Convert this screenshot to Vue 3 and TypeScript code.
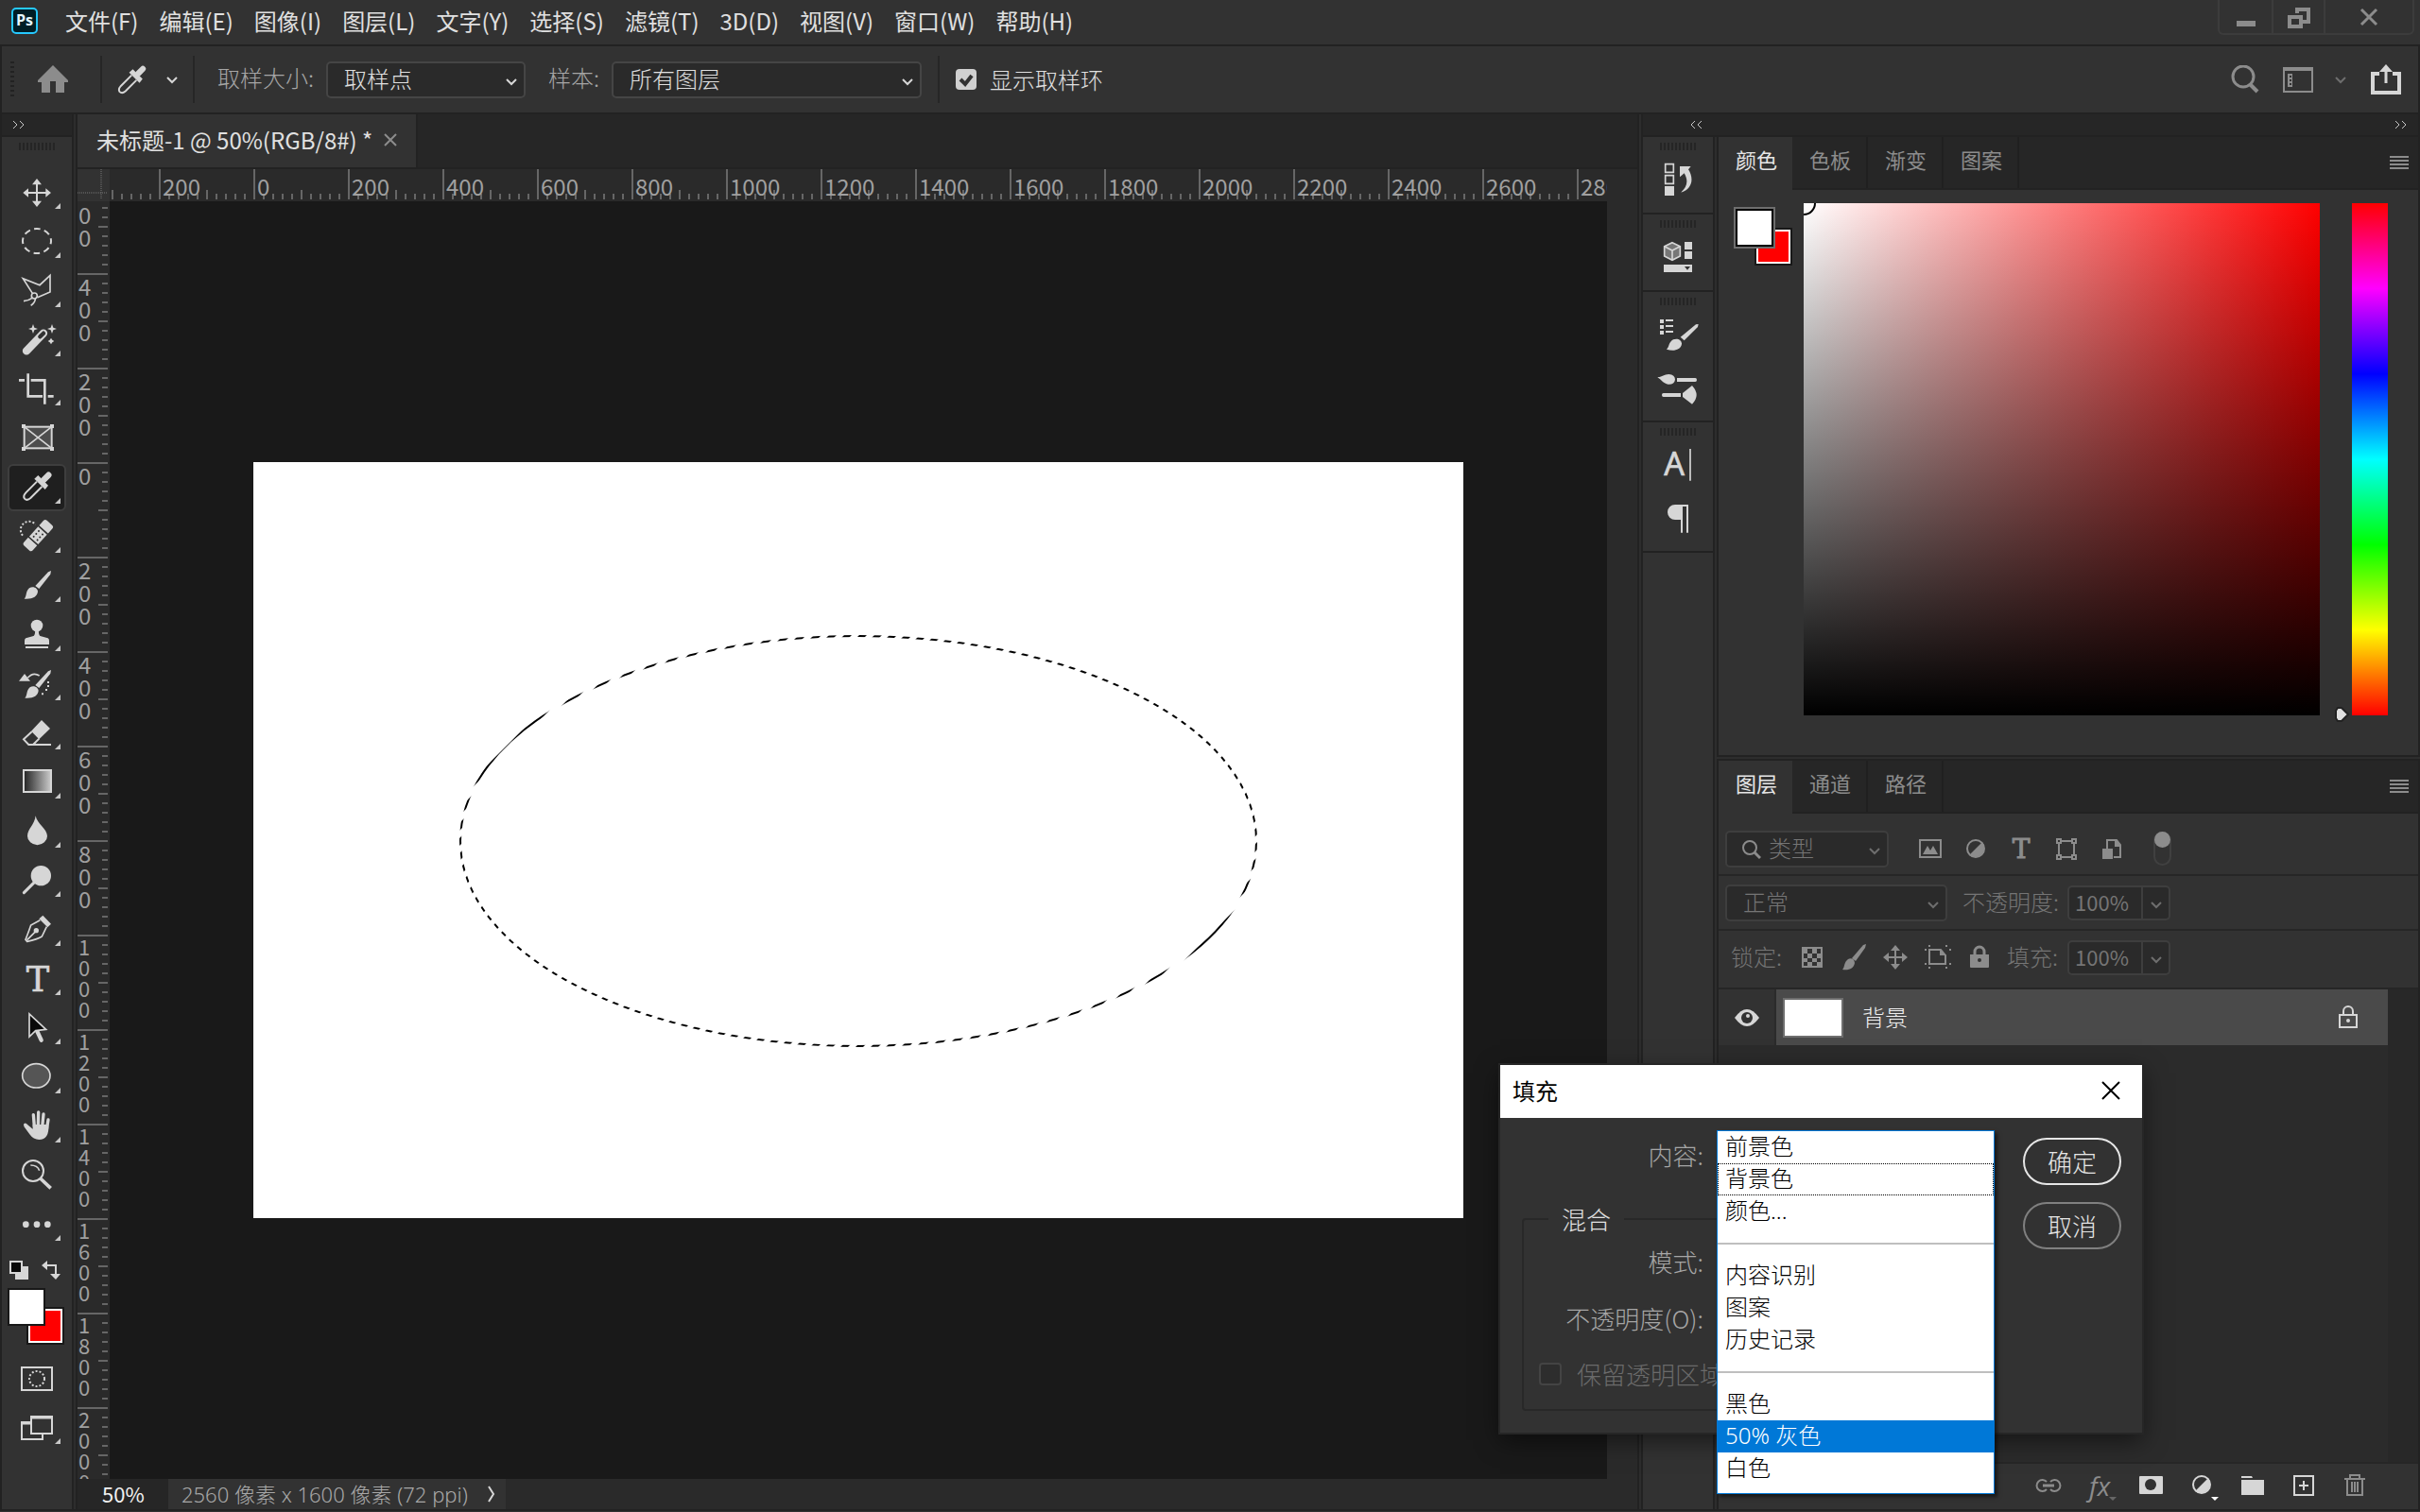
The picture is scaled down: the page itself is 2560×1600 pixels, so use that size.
<script setup lang="ts">
import { ref } from 'vue'

interface Tool {
  name: string
  top: number
  art: string
  more?: boolean
  active?: boolean
}

const menus = ['文件(F)', '编辑(E)', '图像(I)', '图层(L)', '文字(Y)', '选择(S)', '滤镜(T)', '3D(D)', '视图(V)', '窗口(W)', '帮助(H)']

const ink = '#d6d6d6'
const line = (w: number) => `fill="none" stroke="${ink}" stroke-width="${w}"`
const star = (x: number, y: number, r: number) =>
  `<path d="M${x} ${y - r}L${x + 4} ${y - 4}L${x + r} ${y}L${x + 4} ${y + 4}L${x} ${y + r}L${x - 4} ${y + 4}L${x - r} ${y}L${x - 4} ${y - 4}Z"/>`

const dropperArt = `<path d="M139 1163L154 1148" ${line(19)} stroke-linecap="round"/><path d="M121 1149L153 1181L143 1194L109 1160Z"/><path d="M117 1169L82 1204Q72 1215 78 1223Q86 1231 97 1221L133 1185" ${line(6)}/>`

const tools: Tool[] = [
  { name: '移动工具', top: 174, more: true, art: `<path d="M117 215V290M82 252H153" ${line(6)}/><path d="M117 207L102 226H132ZM117 297L102 278H132ZM73 252L90 238V266ZM162 252L145 238V266Z"/>` },
  { name: '椭圆选框工具', top: 330, more: true, art: `<ellipse cx="117" cy="405" rx="45" ry="39" ${line(6)} stroke-dasharray="20 13" stroke-dashoffset="10"/>` },
  { name: '多边形套索工具', top: 486, more: true, art: `<path d="M103 571L73 524L126 545L159 514V567L119 584M102 586Q90 595 75 596M112 588Q112 600 98 610" ${line(5)}/><circle cx="109" cy="579" r="9" ${line(5)}/>` },
  { name: '魔棒工具', top: 642, more: true, art: `<path d="M84 754L138 698" ${line(25)} stroke-linecap="round"/><path d="M127 709L138 698" fill="none" stroke="#323232" stroke-width="13" stroke-linecap="round"/>${star(105, 684, 15)}${star(165, 684, 15)}${star(162, 723, 10)}` },
  { name: '裁剪工具', top: 798, more: true, art: `<path d="M60 847h18M98 847h44v76M89 826v72h46M152 898h18" ${line(8)}/>` },
  { name: '图框工具', top: 954, art: `<rect x="77" y="995" width="87" height="68" fill="#4d4d4d" stroke="${ink}" stroke-width="6"/><path d="M77 995L164 1063M164 995L77 1063" ${line(5)}/><path d="M69 987h12v12h-12zM159 987h12v12h-12zM69 1059h12v12h-12zM159 1059h12v12h-12z"/>` },
  { name: '吸管工具', top: 1110, more: true, active: true, art: dropperArt },
  { name: '污点修复画笔工具', top: 1266, more: true, art: `<g transform="translate(121 1340) rotate(-48)"><path d="M-46-19H-26V19H-46Q-54 19-54 11V-11Q-54-19-46-19ZM46-19H26V19H46Q54 19 54 11V-11Q54-19 46-19ZM-21-19H21V19H-21Z"/><g fill="#323232"><circle cx="-12" cy="-8" r="3"/><circle cx="0" cy="-8" r="3"/><circle cx="12" cy="-8" r="3"/><circle cx="-12" cy="8" r="3"/><circle cx="0" cy="8" r="3"/><circle cx="12" cy="8" r="3"/></g></g><path d="M72 1340A26 26 0 0 1 113 1305" ${line(6)} stroke-dasharray="6 6"/>` },
  { name: '画笔工具', top: 12, more: true, art: `<path d="M162 42L153 46L112 90L124 99L160 53ZM77 131C86 122 80 108 93 97C106 89 120 98 120 108C118 124 104 133 77 131Z"/>` },
  { name: '仿制图章工具', top: 168, more: true, art: `<circle cx="117" cy="216" r="19"/><path d="M111 230H123Q121 248 130 250L152 256Q156 258 156 264V276H78V264Q78 258 82 256L104 250Q113 248 111 230ZM81 282H153V288H81Z"/>` },
  { name: '历史记录画笔工具', top: 324, more: true, art: `<path d="M162 357L153 361L112 405L124 414L160 368ZM79 446C88 437 82 423 95 412C108 404 122 413 122 423C120 439 106 448 79 446ZM60 392L78 369L96 392ZM150 393h6v6h-6zM150 405h6v6h-6zM144 417h6v6h-6zM132 430h6v6h-6z"/><path d="M88 382Q105 362 125 375" ${line(5)}/>` },
  { name: '橡皮擦工具', top: 480, more: true, art: `<path d="M132 516L159 543L124 577L99 551Z"/><path d="M101 553L75 577L91 594H105L124 575" ${line(6)}/><path d="M91 594H162" ${line(6)}/>` },
  { name: '渐变工具', top: 636, more: true, art: `<defs><linearGradient id="ramp"><stop offset="0" stop-color="#222"/><stop offset="1" stop-color="#ccc"/></linearGradient></defs><rect x="75" y="675" width="87" height="69" fill="url(#ramp)" stroke="${ink}" stroke-width="6"/>` },
  { name: '模糊工具', top: 792, more: true, art: `<path d="M113 820C117 845 150 862 150 884A31 28 0 0 1 87 884C87 862 110 848 113 820Z"/>` },
  { name: '减淡工具', top: 948, more: true, art: `<circle cx="130" cy="1010" r="32"/><path d="M76 1064L112 1028" ${line(9)} stroke-linecap="round"/>` },
  { name: '钢笔工具', top: 1104, more: true, art: `<path d="M136 1136L162 1163L151 1174L124 1147Z"/><path d="M127 1151L98 1167Q92 1185 81 1213L86 1219Q118 1212 133 1203L148 1172M86 1214L113 1187" ${line(5)}/><circle cx="115" cy="1184" r="8"/>` },
  { name: '横排文字工具', top: 1260, more: true, art: `<text x="120" y="1377" text-anchor="middle" font-family="DejaVu Serif, serif" font-size="110" stroke="${ink}" stroke-width="2">T</text>` },
  { name: '路径选择工具', top: 6, more: true, art: `<path d="M118 94L131 122" ${line(13)} stroke-linecap="round"/><path d="M93 39V111L113 92L146 88Z" fill="#0a0a0a" stroke="${ink}" stroke-width="5"/>` },
  { name: '椭圆工具', top: 162, more: true, art: `<ellipse cx="115" cy="235" rx="44" ry="38" fill="#555" stroke="${ink}" stroke-width="5"/>` },
  { name: '抓手工具', top: 318, more: true, art: `<path d="M106 359L109 396M122 351L121 396M138 357L134 398M153 375L148 406M80 391L104 420" ${line(10)} stroke-linecap="round"/><path d="M104 390H154Q157 438 124 438Q106 438 94 421L76 396L84 388L104 404Z"/>` },
  { name: '缩放工具', top: 474, art: `<circle cx="105" cy="537" r="33" ${line(6)}/><path d="M97 519Q119 519 125 536" ${line(5)}/><path d="M128 561L161 592" ${line(11)}/>` },
  { name: '编辑工具栏', top: 630, more: true, art: `<circle cx="82" cy="707" r="10"/><circle cx="117" cy="707" r="10"/><circle cx="151" cy="707" r="10"/>` },
]

const dock: { name: string; top: number; art: string }[][] = [
  [{ name: '历史记录', top: 126, art: `<path d="M185 161h26v26h-26zM185 197h26v26h-26z" ${line(5)}/><path d="M183 231h30v30h-30zM231 168H266L258 178C276 205 272 240 234 251C256 232 258 212 245 190L231 202Z"/>` }],
  [{ name: '库', top: 372, art: `<path d="M207 410L232 422V453L207 466L182 453V422Z" fill="#777" stroke="${ink}" stroke-width="5"/><path d="M182 422L207 435L232 422M207 435V466" ${line(5)}/><path d="M246 408h24v24h-24zM246 438h24v24h-24zM180 480h90v24h-90z"/><path d="M246 486h18l-9 11z" fill="#323232"/>` }],
  [
    { name: '画笔设置', top: 618, art: `<path d="M168 654h12v12h-12zM168 672h12v12h-12zM168 690h12v12h-12zM186 654h24v6h-24zM186 672h24v6h-24zM186 690h24v6h-24zM290 669L282 670L233 710L245 721L288 678ZM189 749C198 742 194 728 210 718C224 712 238 720 237 732C234 752 210 756 189 749Z"/>` },
    { name: '画笔', top: 786, art: `<path d="M160 837C175 838 180 828 196 828Q216 830 216 845Q214 861 194 860C180 858 172 846 160 837ZM222 840h58q5 0 5 6t-5 6h-58zM179 888h55v12h-55q-5 0-5-6t5-6zM240 888L270 864Q284 880 284 894Q284 908 270 923L240 900Z"/>` },
  ],
  [
    { name: '字符', top: 1032, art: `<text x="181" y="1149" font-family="Noto Sans, sans-serif" font-size="102" stroke="${ink}" stroke-width="2">A</text><path d="M264 1065V1166" ${line(5)}/>` },
    { name: '段落', top: 1200, art: `<path d="M216 1242H258V1331H252V1248H240V1331H234V1290H216A24 24 0 0 1 216 1242Z"/>` },
  ],
]

const range = (from: number, to: number) => Array.from({ length: to - from + 1 }, (_, i) => from + i)
const ticksX = range(-15, 140)
const ticksY = range(-27, 107)
const labelsX = range(-1, 14)
const labelsY = range(-3, 10)
const tickSize = (k: number) => (k % 10 === 0 ? 32 : k % 5 === 0 ? 10 : 6)
const value = (n: number) => String(Math.abs(n) * 200)
const pitch = (n: number) => (value(n).length > 3 ? 22 : 24)

const fills = ['前景色', '背景色', '颜色...', '', '内容识别', '图案', '历史记录', '', '黑色', '50% 灰色', '白色']
const current = '背景色'
const hovered = ref('50% 灰色')
const showRing = ref(true)
const keepTransparent = ref(false)
</script>

<template>
  <div class="app">
    <header class="menubar">
      <span class="logo">Ps</span>
      <nav class="menus">
        <button v-for="m in menus" :key="m" class="menu">{{ m }}</button>
      </nav>
      <div class="window-buttons">
        <button class="min" aria-label="最小化"><svg width="20" height="24"><rect y="16" width="20" height="6" fill="#8c8c8c" /></svg></button>
        <button class="max" aria-label="还原"><svg width="24" height="24" fill="none" stroke="#8c8c8c" stroke-width="4"><path d="M10 8V4H22V17H16M2 12H14V22H2Z" /></svg></button>
        <button class="close" aria-label="关闭"><svg width="20" height="20" stroke="#8c8c8c" stroke-width="3"><path d="M2 2L18 18M18 2L2 18" /></svg></button>
      </div>
    </header>

    <section class="options">
      <span class="dots"></span>
      <button class="home" aria-label="主页"><svg width="32" height="30" fill="#8c8c8c"><path d="M16 0L32 16V18H28V29H19V17H13V29H4V18H0V16Z" /></svg></button>
      <span class="rule"></span>
      <button class="current-tool" aria-label="吸管工具">
        <svg width="31" height="31" viewBox="70 1136 96 96" fill="#d6d6d6" v-html="dropperArt"></svg>
        <svg width="14" height="9" class="chev"><path d="M2 2L7 7L12 2" /></svg>
      </button>
      <span class="rule"></span>
      <label class="opt-label" for="size">取样大小:</label>
      <span class="select size">
        <select id="size"><option>取样点</option></select>
        <svg width="14" height="9" class="chev"><path d="M2 2L7 7L12 2" /></svg>
      </span>
      <label class="opt-label" for="sample">样本:</label>
      <span class="select layers">
        <select id="sample"><option>所有图层</option></select>
        <svg width="14" height="9" class="chev"><path d="M2 2L7 7L12 2" /></svg>
      </span>
      <span class="rule ring-rule"></span>
      <label class="ring"><input v-model="showRing" type="checkbox" />显示取样环</label>
      <div class="options-right">
        <button aria-label="搜索"><svg width="30" height="30" fill="none" stroke="#8c8c8c"><circle cx="13" cy="12" r="11" stroke-width="3" /><path d="M20 20L28 28" stroke-width="4" /></svg></button>
        <button class="workspace-btn" aria-label="工作区">
          <svg width="32" height="28"><path d="M1 3H31V27H1Z" fill="none" stroke="#8c8c8c" stroke-width="2" /><path d="M0 1H32V5H0ZM5 8H10V22H5Z" fill="#8c8c8c" /><path d="M7 10h2v2h-2zM7 14h2v2h-2zM7 18h2v2h-2z" fill="#323232" /></svg>
          <svg width="14" height="9" class="chev dim"><path d="M2 2L7 7L12 2" /></svg>
        </button>
        <button aria-label="共享"><svg width="32" height="32" fill="none" stroke="#d6d6d6" stroke-width="4"><path d="M9 10H2V30H30V10H23" /><path d="M16 20V5" stroke-width="3" /><path d="M16 0L23 8H9Z" fill="#d6d6d6" stroke="none" /></svg></button>
      </div>
    </section>

    <div class="workspace">
      <aside class="toolbar">
        <div class="strip"><svg width="14" height="10" class="expand"><path d="M1 1L5 5L1 9M8 1L12 5L8 9" /></svg></div>
        <div class="tool-body">
          <div class="grip-row"><span class="grip"></span></div>
          <button v-for="t in tools" :key="t.name" class="tool" :class="{ active: t.active }" :aria-label="t.name">
            <svg width="62" height="52" :viewBox="`24 ${t.top} 186 156`" fill="#d6d6d6" v-html="t.art"></svg>
            <span v-if="t.more" class="corner"></span>
          </button>
          <div class="swap-row">
            <svg width="20" height="20"><rect x="6" y="6" width="14" height="14" fill="#d6d6d6" /><rect x="1" y="1" width="12" height="12" fill="#0a0a0a" stroke="#d6d6d6" stroke-width="2" /></svg>
            <svg width="20" height="20" fill="#d6d6d6"><path d="M0 5L6 0V4H16V14H20L15 20L9 14H14V6H6V10Z" /></svg>
          </div>
          <div class="swatches">
            <span class="bg-color"></span><span class="fg-color"></span>
          </div>
          <button class="tool" aria-label="快速蒙版"><svg width="34" height="26" fill="none" stroke="#d6d6d6" stroke-width="2"><rect x="1" y="1" width="32" height="24" /><circle cx="17" cy="13" r="8" stroke-dasharray="2 2" /></svg></button>
          <button class="tool" aria-label="屏幕模式"><svg width="34" height="26" fill="none" stroke="#d6d6d6" stroke-width="2"><path d="M11 1H33V19H11ZM11 7H1V25H23V19" /><path d="M10 2H34M1 8H11" stroke-width="3" /></svg><span class="corner"></span></button>
        </div>
      </aside>

      <main class="document">
        <div class="doc-tabs">
          <div class="doc-tab">未标题-1 @ 50%(RGB/8#) * <button class="tab-close" aria-label="关闭标签"><svg width="14" height="14" stroke="#8c8c8c" stroke-width="2"><path d="M1 1L13 13M13 1L1 13" /></svg></button></div>
        </div>
        <div class="doc-body">
          <div class="stage">
            <div class="ruler-row">
              <svg class="ruler-corner" width="34" height="34"><path d="M25 0V32M0 25H32" stroke="#777" stroke-dasharray="1 1" /></svg>
              <svg class="ruler-h" width="100%" height="34">
                <rect v-for="k in ticksX" :key="k" :x="152 + k * 10" :y="32 - tickSize(k)" width="2" :height="tickSize(k)" fill="#666" />
                <text v-for="n in labelsX" :key="n" :x="156 + n * 100" y="28">{{ value(n) }}</text>
              </svg>
            </div>
            <div class="view-row">
              <svg class="ruler-v" width="34" height="100%">
                <rect v-for="k in ticksY" :key="k" :x="32 - tickSize(k)" :y="276 + k * 10" :width="tickSize(k)" height="2" fill="#666" />
                <g v-for="n in labelsY" :key="n">
                  <text v-for="(d, i) in value(n)" :key="i" x="1" :class="{ small: pitch(n) === 22 }" :y="276 + n * 100 + (i + 1) * pitch(n)">{{ d }}</text>
                </g>
              </svg>
              <div class="viewport">
                <svg class="artboard" width="1280" height="800">
                  <defs>
                    <pattern id="ants" width="16" height="16" patternUnits="userSpaceOnUse">
                      <path d="M8 0H16L0 16V8ZM16 8V16H8Z" fill="#000" />
                    </pattern>
                  </defs>
                  <ellipse cx="640" cy="401" rx="421" ry="217" fill="none" stroke="url(#ants)" stroke-width="2" />
                </svg>
              </div>
            </div>
          </div>
        </div>
        <div class="statusbar">
          <span class="zoom">50%</span>
          <span class="info">2560 像素 x 1600 像素 (72 ppi)<svg width="10" height="18" fill="none" stroke="#d6d6d6" stroke-width="2"><path d="M2 1L7 9L2 17" /></svg></span>
        </div>
      </main>

      <div class="side">
        <div class="strip side-strip">
          <svg width="14" height="10" class="expand"><path d="M5 1L1 5L5 9M12 1L8 5L12 9" /></svg>
          <svg width="14" height="10" class="expand"><path d="M1 1L5 5L1 9M8 1L12 5L8 9" /></svg>
        </div>
        <div class="side-body">
          <aside class="dock">
            <div v-for="(g, i) in dock" :key="i" class="dock-group">
              <span class="grip"></span>
              <button v-for="d in g" :key="d.name" :aria-label="d.name">
                <svg width="74" height="56" :viewBox="`114 ${d.top} 222 168`" fill="#d6d6d6" v-html="d.art"></svg>
              </button>
            </div>
          </aside>

          <div class="panels">
            <section class="panel">
              <div class="tabs">
                <button class="tab on">颜色</button><button class="tab">色板</button><button class="tab">渐变</button><button class="tab">图案</button>
                <svg class="burger" width="20" height="14" fill="#8c8c8c"><path d="M0 0h20v2h-20zM0 4h20v2h-20zM0 8h20v2h-20zM0 12h20v2h-20z" /></svg>
              </div>
              <div class="color-body">
                <div class="swatches big"><span class="bg-color"></span><span class="fg-color"></span></div>
                <div class="spectrum"><svg width="14" height="14" fill="none" stroke="#000" stroke-width="2"><circle r="12" /></svg></div>
                <div class="hue">
                  <svg class="hue-mark" width="16" height="18"><path d="M3 2H7L14 9L7 16H3L1 13V5Z" fill="#e0e0e0" stroke="#222" stroke-width="2" /></svg>
                </div>
              </div>
            </section>

            <section class="panel layers-panel">
              <div class="tabs">
                <button class="tab on">图层</button><button class="tab">通道</button><button class="tab">路径</button>
                <svg class="burger" width="20" height="14" fill="#8c8c8c"><path d="M0 0h20v2h-20zM0 4h20v2h-20zM0 8h20v2h-20zM0 12h20v2h-20z" /></svg>
              </div>
              <div class="row filter">
                <span class="select kind">
                  <svg width="20" height="22" class="lens" fill="none" stroke="#8c8c8c"><circle cx="8" cy="9" r="7" stroke-width="2" /><path d="M13 14L19 20" stroke-width="3" /></svg>
                  <select aria-label="图层过滤"><option>类型</option></select>
                  <svg width="14" height="9" class="chev dim"><path d="M2 2L7 7L12 2" /></svg>
                </span>
                <div class="filter-icons">
                  <button aria-label="像素图层"><svg width="24" height="24"><rect x="1" y="3" width="22" height="18" fill="none" stroke="#8c8c8c" stroke-width="2" /><path d="M4 18L9 9L12 14L15 9L20 18Z" fill="#8c8c8c" /></svg></button>
                  <button aria-label="调整图层"><svg width="24" height="24"><circle cx="12" cy="12" r="9" fill="none" stroke="#8c8c8c" stroke-width="2" /><path d="M19 5A10 10 0 0 1 5 19Z" fill="#8c8c8c" /></svg></button>
                  <button aria-label="文字图层"><svg width="24" height="24"><text x="12" y="22" text-anchor="middle" font-family="DejaVu Serif, serif" font-size="28" fill="#8c8c8c" stroke="#8c8c8c">T</text></svg></button>
                  <button aria-label="形状图层"><svg width="24" height="24" fill="#323232" stroke="#8c8c8c" stroke-width="2"><rect x="4" y="4" width="16" height="17" /><path d="M2 2h4v4h-4zM18 2h4v4h-4zM2 19h4v4h-4zM18 19h4v4h-4z" /></svg></button>
                  <button aria-label="智能对象"><svg width="24" height="24"><path d="M7 12V3H17L21 8V21H14" fill="none" stroke="#8c8c8c" stroke-width="2" /><path d="M2 12H13V23H2ZM15 3V10H22L17 3Z" fill="#8c8c8c" /></svg></button>
                </div>
                <button class="toggle" aria-label="打开或关闭图层过滤"><span></span></button>
              </div>
              <div class="row blend">
                <span class="select mode">
                  <select aria-label="混合模式"><option>正常</option></select>
                  <svg width="14" height="9" class="chev dim"><path d="M2 2L7 7L12 2" /></svg>
                </span>
                <label class="dim-label" for="opacity">不透明度:</label>
                <span class="num"><input id="opacity" value="100%" /><button aria-label="不透明度选项"><svg width="14" height="9" class="chev dim"><path d="M2 2L7 7L12 2" /></svg></button></span>
              </div>
              <div class="row lock">
                <span class="dim-label">锁定:</span>
                <div class="lock-icons">
                  <button aria-label="锁定透明像素"><svg width="26" height="26"><path d="M2 2h22v22h-22z" fill="#8c8c8c" /><path d="M8 4h5v5h-5zM18 4h4v5h-4zM4 9h4v5h-4zM13 9h5v5h-5zM8 14h5v4h-5zM18 14h4v4h-4zM4 18h4v4h-4zM13 18h5v4h-5z" fill="#323232" /></svg></button>
                  <button aria-label="锁定图像像素"><svg width="26" height="28" fill="#8c8c8c"><path d="M26 0L23 1L11 15L15 18L25 4ZM1 27C4 24 2 20 7 16C11 14 14 17 14 20C13 26 8 28 1 27Z" /></svg></button>
                  <button aria-label="锁定位置"><svg width="26" height="26" fill="#8c8c8c"><path d="M13 0L18 6H14V12H20V8L26 13L20 18V14H14V20H18L13 26L8 20H12V14H6V18L0 13L6 8V12H12V6H8Z" /></svg></button>
                  <button aria-label="锁定画板"><svg width="28" height="26"><path d="M5 5H17L22 11V20H5Z" fill="none" stroke="#8c8c8c" stroke-width="2" /><path d="M16 4V11H23ZM0 4h2v2h-2zM4 0h2v2h-2zM22 0h2v2h-2zM26 4h2v2h-2zM0 19h2v2h-2zM4 23h2v2h-2zM22 23h2v2h-2zM26 19h2v2h-2z" fill="#8c8c8c" /></svg></button>
                  <button aria-label="全部锁定"><svg width="26" height="26"><path d="M7 10V7A5 5 0 0 1 17 7V10" fill="none" stroke="#8c8c8c" stroke-width="3" /><path d="M2 10H22V23Q22 24 21 24H3Q2 24 2 23Z" fill="#8c8c8c" /><circle cx="12" cy="16" r="2" fill="#323232" /></svg></button>
                </div>
                <label class="dim-label" for="fillamt">填充:</label>
                <span class="num"><input id="fillamt" value="100%" /><button aria-label="填充选项"><svg width="14" height="9" class="chev dim"><path d="M2 2L7 7L12 2" /></svg></button></span>
              </div>
              <div class="layer-list">
                <div class="layer-col">
                  <div class="layer">
                    <button class="eye" aria-label="可见性"><svg width="26" height="18"><path d="M0 9Q13-9 26 9Q13 27 0 9Z" fill="#d6d6d6" /><circle cx="13" cy="9" r="6" fill="#323232" /><circle cx="14" cy="7" r="2" fill="#d6d6d6" /></svg></button>
                    <div class="layer-main">
                      <span class="thumb"></span>
                      <span class="layer-name">背景</span>
                      <svg width="22" height="26" fill="none" stroke="#d6d6d6" stroke-width="2"><rect x="2" y="10" width="18" height="13" /><path d="M6 10V6A5 5 0 0 1 16 6V10" /><circle cx="11" cy="16" r="2" fill="#d6d6d6" stroke="none" /></svg>
                    </div>
                  </div>
                </div>
                <div class="scroll-col"></div>
              </div>
              <div class="layer-actions">
                <button aria-label="链接图层"><svg width="28" height="28" fill="none" stroke="#8c8c8c" stroke-width="2"><path d="M12 10A6 6 0 1 0 12 18M16 10A6 6 0 1 1 16 18" /><path d="M8 14H20" stroke-width="3" /></svg></button>
                <button class="fx" aria-label="图层样式"><span>fx</span><svg class="down" width="8" height="4"><path d="M0 0H8L4 4Z" fill="#666" /></svg></button>
                <button aria-label="添加蒙版"><svg width="28" height="28"><rect x="2" y="4" width="25" height="19" rx="1" fill="#d6d6d6" /><circle cx="14" cy="13" r="6" fill="#323232" /></svg></button>
                <button aria-label="调整图层"><svg width="28" height="28"><circle cx="14" cy="13" r="9" fill="none" stroke="#d6d6d6" stroke-width="2" /><path d="M21 6A10 10 0 0 1 7 20Z" fill="#d6d6d6" /></svg><svg class="down" width="8" height="4"><path d="M0 0H8L4 4Z" fill="#fff" /></svg></button>
                <button aria-label="新建组"><svg width="28" height="28"><path d="M2 4H13L14 6H2ZM2 8H26V24H2Z" fill="#d6d6d6" /></svg></button>
                <button aria-label="新建图层"><svg width="28" height="28" fill="none" stroke="#d6d6d6" stroke-width="2"><rect x="4" y="4" width="20" height="20" /><path d="M9 14H19M14 9V19" /></svg></button>
                <button aria-label="删除图层"><svg width="28" height="28" fill="none" stroke="#8c8c8c" stroke-width="2"><path d="M3 7H25M9 6V3H19V6M6 7V24H22V7M11 10V21M14 10V21M17 10V21" /></svg></button>
              </div>
            </section>
          </div>
        </div>
      </div>
    </div>

    <div class="dialog" role="dialog" aria-labelledby="dlg-title">
      <div class="dlg-title">
        <span id="dlg-title">填充</span>
        <button aria-label="关闭对话框"><svg width="20" height="20" stroke="#000" stroke-width="2"><path d="M1 1L19 19M19 1L1 19" /></svg></button>
      </div>
      <div class="dlg-body">
        <div class="dlg-form">
          <div id="contents" class="dlg-row first">内容:</div>
          <fieldset>
            <legend>混合</legend>
            <div class="dlg-row">模式:</div>
            <div class="dlg-row">不透明度(O):</div>
            <label class="keep"><input v-model="keepTransparent" type="checkbox" disabled />保留透明区域</label>
          </fieldset>
          <ul class="list" role="listbox" aria-labelledby="contents">
            <li
              v-for="(f, i) in fills"
              :key="i"
              :role="f ? 'option' : 'separator'"
              :class="{ sep: !f, current: f === current, hot: !!f && f === hovered }"
              @mouseenter="f && (hovered = f)"
            >{{ f }}</li>
          </ul>
        </div>
        <div class="dlg-buttons">
          <button class="ok">确定</button>
          <button>取消</button>
        </div>
      </div>
    </div>
  </div>
</template>

<style>
body {
  margin: 0;
  background: #323232;
}
</style>

<style scoped>
.app {
  position: relative;
  box-sizing: border-box;
  display: flex;
  flex-direction: column;
  height: 100vh;
  min-height: 1600px;
  padding-bottom: 1px;
  background: #323232;
  color: #e0e0e0;
  font: 24px/32px "Noto Sans CJK SC", sans-serif;
  overflow: hidden;
}
.app *, .app *::before { box-sizing: border-box; }
button, select, input {
  margin: 0;
  padding: 0;
  border: 0;
  background: none;
  color: inherit;
  font: inherit;
}
svg { display: block; flex: none; }
.chev { fill: none; stroke: #d6d6d6; stroke-width: 2; }
.chev.dim { stroke: #6e6e6e; }
.expand { fill: none; stroke: #c8c8c8; stroke-width: 1; }

.menubar {
  display: flex;
  height: 49px;
  flex: none;
  border-bottom: 2px solid #222;
}
.logo {
  width: 28px;
  height: 28px;
  margin: 8px 29px 0 12px;
  border: 2px solid #26c9ff;
  border-radius: 5px;
  background: #001e26;
  color: #e4f8ff;
  font: 700 16px/22px "Open Sans", sans-serif;
  text-align: center;
}
.menus { display: flex; gap: 22px; height: 44px; align-items: center; }
.menu { white-space: nowrap; }
.window-buttons {
  display: flex;
  height: 37px;
  margin: 0 6px 0 auto;
  border: 2px solid #3c3c3c;
  border-top: 0;
  border-radius: 0 0 6px 6px;
}
.window-buttons button { display: grid; place-items: center; width: 55px; }
.window-buttons button + button { border-left: 2px solid #3c3c3c; }
.window-buttons .close { width: 94px; }

.options {
  display: flex;
  align-items: center;
  height: 72px;
  flex: none;
  padding: 0 18px 0 9px;
  border: 2px solid #222;
  border-top: 0;
}
.options > * { flex: none; }
.dots { width: 4px; height: 38px; background: repeating-linear-gradient(#222 0 2px, transparent 2px 5px); }
.home { margin: 0 34px 0 25px; }
.rule { width: 2px; height: 50px; background: #262626; }
.current-tool { display: flex; align-items: center; gap: 20px; margin: 0 15px 0 16px; }
.opt-label { margin: 0 13px 0 24px; padding-bottom: 4px; color: #a6a6a6; font-weight: 300; }
.select {
  position: relative;
  display: flex;
  align-items: center;
  height: 39px;
  border: 2px solid #454545;
  border-radius: 5px;
  background: #2a2a2a;
  font-weight: 300;
}
.select select { appearance: none; width: 100%; height: 35px; padding: 0 0 2px 17px; outline: 0; }
.select .chev { position: absolute; right: 6px; top: 15px; }
.size { width: 211px; }
.layers { width: 328px; }
.ring-rule { margin: 0 17px; }
.ring { display: flex; align-items: center; gap: 14px; font-weight: 300; }
.ring input {
  appearance: none;
  width: 22px;
  height: 22px;
  border-radius: 4px;
  background: #d0d0d0 url("data:image/svg+xml,%3Csvg xmlns='http://www.w3.org/2000/svg' width='22' height='22'%3E%3Cpath d='M5 11L10 16L17 7' fill='none' stroke='%23323232' stroke-width='4'/%3E%3C/svg%3E");
}
.options-right { display: flex; align-items: center; gap: 25px; margin-left: auto; }
.workspace-btn { display: flex; align-items: center; gap: 22px; }

.workspace { display: flex; flex: 1; gap: 2px; min-height: 0; background: #2d2d2d; border-bottom: 2px solid #222; }
.strip { display: flex; align-items: center; height: 24px; flex: none; border-bottom: 2px solid #222; background: #262626; }
.toolbar { width: 78px; flex: none; border: solid #222; border-width: 0 2px; background: #323232; }
.toolbar .strip { padding-left: 11px; }
.tool-body { display: flex; flex-direction: column; padding: 0 6px; }
.grip-row { height: 33px; padding: 6px 12px; }
.grip { display: block; width: 38px; height: 8px; background: repeating-linear-gradient(90deg, #252525 0 2px, transparent 2px 4px); }
.tool { position: relative; display: grid; place-items: center; height: 52px; flex: none; }
.tool.active::before { content: ""; position: absolute; inset: 1px 0; border: 2px solid #3e3e3e; border-radius: 6px; background: #1f1f1f; }
.tool svg { position: relative; }
.corner { position: absolute; right: 6px; bottom: 9px; border: solid transparent; border-width: 3px; border-right-color: #c8c8c8; border-bottom-color: #c8c8c8; }
.swap-row { display: flex; gap: 14px; height: 20px; margin: 12px 0 9px 2px; }
.swatches { position: relative; flex: none; width: 60px; height: 60px; margin-bottom: 10px; }
.fg-color, .bg-color { position: absolute; width: 40px; height: 40px; }
.fg-color { left: 0; top: 0; border: 2px solid #181818; background: #fff; }
.bg-color { right: 0; bottom: 0; border: 2px solid #181818; background: #f00; box-shadow: inset 0 0 0 2px #fff; }

.document { display: flex; flex: 1; flex-direction: column; min-width: 0; border: solid #222; border-width: 0 2px; background: #2a2a2a; }
.doc-tabs { display: flex; height: 58px; flex: none; border-bottom: 2px solid #222; background: #262626; }
.doc-tab { display: flex; align-items: center; gap: 12px; padding: 0 20px 2px; border-right: 2px solid #222; background: #323232; white-space: nowrap; }
.doc-body { flex: 1; min-height: 0; padding-right: 32px; }
.stage { display: flex; flex-direction: column; height: 100%; }
.ruler-row { display: flex; height: 34px; flex: none; }
.ruler-corner { background: #323232; }
.ruler-h { flex: 1; min-width: 0; overflow: hidden; }
.ruler-h text, .ruler-v text { fill: #a0a0a0; font-size: 24px; }
.ruler-v text.small { font-size: 22px; }
.view-row { display: flex; flex: 1; min-height: 0; }
.ruler-v { overflow: hidden; }
.viewport { display: flex; flex: 1; align-items: center; justify-content: center; min-width: 0; background: #191919; }
.artboard { background: #fff; }
.statusbar { display: flex; height: 32px; flex: none; font-size: 22px; line-height: 30px; }
.zoom { width: 96px; padding-left: 26px; background: #262626; color: #f2f2f2; }
.info { display: flex; align-items: center; gap: 20px; padding: 0 10px 0 14px; background: #323232; color: #a8a8a8; font-family: "Noto Sans", "Noto Sans CJK SC", sans-serif; font-weight: 300; white-space: nowrap; }

.side { display: flex; flex-direction: column; width: 824px; flex: none; }
.side-strip { justify-content: space-between; padding: 0 11px 0 50px; border: 2px solid #222; border-top: 0; }
.side-body { display: flex; flex: 1; gap: 2px; min-height: 0; }
.dock { width: 78px; flex: none; border: solid #222; border-width: 0 2px; background: #323232; }
.dock-group { display: flex; flex-direction: column; padding: 6px 0 7px; border-bottom: 2px solid #222; }
.dock-group .grip { margin: 0 18px 3px; }
.dock-group button { height: 56px; }
.panels { display: flex; flex: 1; flex-direction: column; gap: 2px; min-width: 0; }
.panel { border: solid #222; border-width: 0 2px 2px; background: #323232; }
.tabs { display: flex; align-items: center; height: 56px; padding-right: 10px; border-bottom: 2px solid #222; background: #262626; font-size: 22px; }
.tab { width: 80px; height: 54px; padding: 0 0 8px 2px; border-right: 2px solid #202020; color: #8c8c8c; }
.tab.on { width: 78px; height: 56px; margin-bottom: -2px; padding-bottom: 10px; border: 0; background: #323232; color: #e6e6e6; }
.burger { margin-left: auto; }
.color-body { display: flex; height: 598px; padding: 14px 32px 42px 16px; }
.swatches.big { width: 62px; height: 62px; margin: 4px 12px 0 0; }
.big .fg-color { width: 44px; height: 44px; border-color: #6e6e6e; box-shadow: inset 0 0 0 2px #000; }
.spectrum { flex: 1; background: linear-gradient(to top, #000, transparent), linear-gradient(to right, #fff, #f00); }
.hue { position: relative; width: 38px; margin-left: 34px; background: linear-gradient(#f00, #f0f, #00f, #0ff, #0f0, #ff0, #f00); }
.hue-mark { position: absolute; left: -18px; bottom: -8px; }

.layers-panel { display: flex; flex: 1; flex-direction: column; min-height: 0; border-top-width: 2px; border-bottom: 0; }
.layers-panel > * { flex: none; }
.row { display: flex; align-items: center; padding-left: 7px; border-bottom: 2px solid #262626; color: #757575; font-weight: 300; }
.row .select { border-color: #3e3e3e; }
.filter { height: 66px; padding-top: 10px; }
.kind { width: 173px; }
.kind .lens { position: absolute; left: 16px; top: 7px; }
.kind select { padding-left: 44px; }
.filter-icons { display: flex; gap: 24px; margin: 0 32px; }
.toggle { width: 19px; height: 36px; border: 2px solid #404040; border-radius: 10px; }
.toggle span { display: block; width: 17px; height: 17px; margin: -2px -1px 19px; border-radius: 50%; background: #8c8c8c; }
.blend { height: 58px; }
.mode { width: 235px; margin-right: 16px; }
.dim-label { width: 111px; padding-bottom: 2px; white-space: nowrap; }
.num { display: flex; width: 109px; height: 37px; border: 2px solid #3e3e3e; border-radius: 5px; background: #2a2a2a; font-size: 22px; font-weight: 400; }
.num input { width: 76px; padding: 0 0 2px 6px; outline: 0; }
.num button { flex: 1; display: grid; place-items: center; padding-top: 4px; border-left: 2px solid #3e3e3e; }
.lock { height: 62px; padding: 0 0 4px 13px; }
.lock .dim-label { width: 73px; }
.lock label.dim-label { width: 64px; }
.lock-icons { display: flex; align-items: center; gap: 18px; width: 219px; }
.layers-panel > .layer-list { display: flex; flex: 1; min-height: 0; background: #2b2b2b; }
.layer-col { flex: 1; }
.scroll-col { width: 32px; background: #282828; }
.layer { display: flex; height: 59px; }
.eye { display: grid; place-items: center; width: 61px; border-right: 2px solid #2b2b2b; background: #323232; }
.layer-main { display: flex; flex: 1; align-items: center; padding: 0 31px 0 7px; background: #4a4a4a; font-weight: 300; }
.thumb { width: 64px; height: 42px; margin-right: 20px; border: 2px solid #6e6e6e; background: #fff; }
.layer-name { flex: 1; padding-bottom: 2px; color: #f0f0f0; }
.layer-actions { display: flex; align-items: center; justify-content: flex-end; gap: 26px; height: 50px; padding: 0 53px 2px 0; border-top: 2px solid #262626; }
.layer-actions button { position: relative; width: 28px; height: 28px; }
.fx span { display: block; color: #8c8c8c; font: italic 28px/24px "Open Sans", sans-serif; }
.down { position: absolute; right: -4px; bottom: -2px; }

.dialog { position: absolute; right: 294px; bottom: 84px; width: 679px; background: #323232; box-shadow: 0 0 0 2px #262626, 0 8px 24px #0008; font-size: 26px; font-weight: 300; }
.dlg-title { display: flex; align-items: center; justify-content: space-between; height: 56px; padding: 0 23px 2px 13px; background: #fff; color: #000; font-size: 24px; font-weight: 400; }
.dlg-body { display: flex; justify-content: space-between; height: 333px; color: #a6a6a6; }
.dlg-form { position: relative; width: 523px; }
.dlg-row { width: 190px; height: 60px; line-height: 60px; text-align: right; white-space: nowrap; }
.dlg-row.first { width: 215px; height: 80px; line-height: 78px; }
fieldset { width: 498px; margin: 12px 0 0 23px; padding: 0 0 8px; border: 2px solid #282828; border-radius: 4px; }
legend { margin-left: 26px; padding: 0 14px; color: #e0e0e0; line-height: 30px; }
.keep { display: flex; align-items: center; gap: 16px; height: 58px; padding-left: 16px; color: #6a6a6a; white-space: nowrap; }
.keep input { appearance: none; width: 24px; height: 24px; border: 2px solid #444; border-radius: 4px; background: #2d2d2d; }
.list { position: absolute; left: 229px; top: 13px; width: 294px; margin: 0; padding: 0 0 9px; border: 1px solid #0078d7; background: #fff; box-shadow: 3px 3px 4px #0008; color: #000; font-family: "Noto Sans", "Noto Sans CJK SC", sans-serif; font-size: 24px; list-style: none; }
.list li { height: 34px; padding-left: 8px; line-height: 32px; }
.list .current { border: 1px dotted #000; padding-left: 7px; line-height: 30px; }
.list .hot { background: #0078d7; color: #fff; }
.list .sep { background: linear-gradient(#bfbfbf, #bfbfbf) 0 16px / 100% 2px no-repeat; }
.dlg-buttons { display: flex; flex-direction: column; gap: 18px; padding: 21px 22px 0 0; }
.dlg-buttons button { width: 104px; height: 50px; border: 2px solid #808080; border-radius: 25px; color: #e6e6e6; }
.dlg-buttons .ok { border-color: #e6e6e6; }
</style>
